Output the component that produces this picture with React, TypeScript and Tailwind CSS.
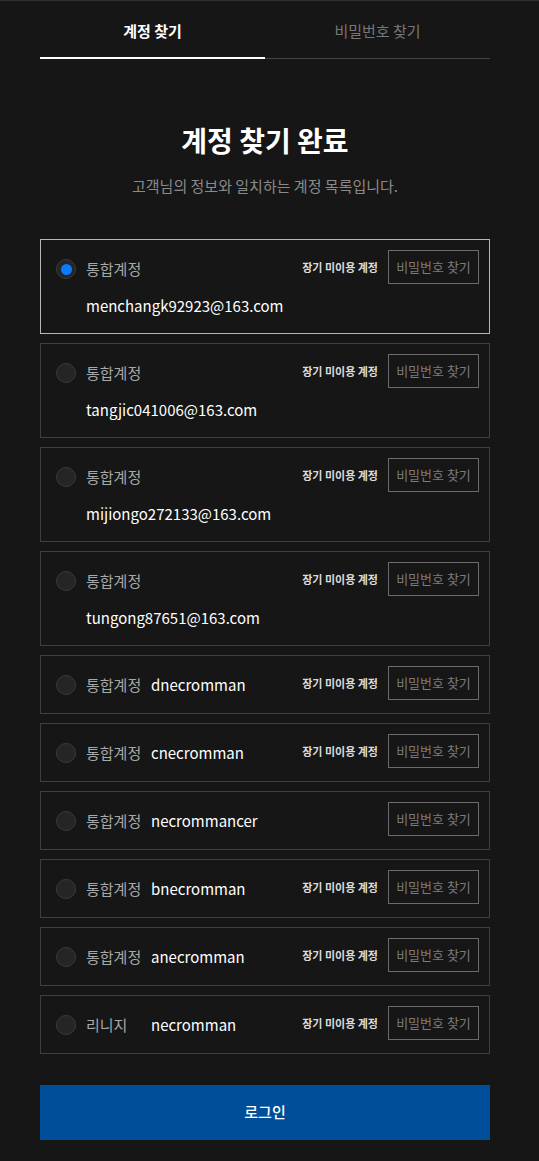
import React, { useState } from 'react';

interface Account {
  type: string;
  id: string;
  dormant: boolean;
  twoLine: boolean;
}

const accounts: Account[] = [
  { type: '통합계정', id: 'menchangk92923@163.com', dormant: true, twoLine: true },
  { type: '통합계정', id: 'tangjic041006@163.com', dormant: true, twoLine: true },
  { type: '통합계정', id: 'mijiongo272133@163.com', dormant: true, twoLine: true },
  { type: '통합계정', id: 'tungong87651@163.com', dormant: true, twoLine: true },
  { type: '통합계정', id: 'dnecromman', dormant: true, twoLine: false },
  { type: '통합계정', id: 'cnecromman', dormant: true, twoLine: false },
  { type: '통합계정', id: 'necrommancer', dormant: false, twoLine: false },
  { type: '통합계정', id: 'bnecromman', dormant: true, twoLine: false },
  { type: '통합계정', id: 'anecromman', dormant: true, twoLine: false },
  { type: '리니지', id: 'necromman', dormant: true, twoLine: false },
];

const AccountCard: React.FC<{ account: Account; selected: boolean; onSelect: () => void }> = ({
  account,
  selected,
  onSelect,
}) => {
  return (
    <div
      onClick={onSelect}
      className={`border ${selected ? 'border-[#b8b8b8]' : 'border-[#3e3e3e]'} pl-[15px] pr-[10px] pt-[10px] ${
        account.twoLine ? 'pb-[16px]' : 'pb-[9px]'
      } cursor-pointer`}
    >
      <div className="flex h-[38px] items-center">
        <div className="flex h-5 w-5 items-center justify-center rounded-full border border-[#3a3a3a] bg-[#252525]">
          {selected && <div className="h-[11px] w-[11px] rounded-full bg-[#0a7cff]" />}
        </div>
        <span className="ml-[10px] w-[65px] text-[15px] leading-[22px] text-[#a8a8a8]">{account.type}</span>
        {!account.twoLine && <span className="text-[15px] leading-[22px] text-white">{account.id}</span>}
        <div className="ml-auto flex items-start self-start">
          {account.dormant && (
            <span className="mr-[10px] mt-[9px] text-[11px] leading-4 font-semibold text-[#dcdcdc]">장기 미이용 계정</span>
          )}
          <button className="h-[34px] w-[91px] border border-[#6a6a6a] text-[13px] text-[#7a7a7a]">비밀번호 찾기</button>
        </div>
      </div>
      {account.twoLine && (
        <div className="mt-[7px] pl-[30px] text-[15px] leading-[22px] text-white">{account.id}</div>
      )}
    </div>
  );
};

export default function App() {
  const [selected, setSelected] = useState(0);

  return (
    <div
      className="min-h-[1161px] border-t border-[#2e2e2e] bg-[#161616]"
      style={{ fontFamily: '"Noto Sans CJK KR", "Noto Sans", sans-serif' }}
    >
      <div className="ml-10 w-[450px] pb-[21px]">
        <div className="grid grid-cols-2">
          <div className="flex flex-col">
            <div className="flex h-[56px] items-center justify-center pt-[4px] text-[15px] font-semibold text-white">계정 찾기</div>
            <div className="h-[2px] bg-white" />
          </div>
          <div className="flex flex-col">
            <div className="flex h-[56px] items-center justify-center pt-[4px] text-[15px] text-[#777777]">비밀번호 찾기</div>
            <div className="mt-px h-px bg-[#444444]" />
          </div>
        </div>

        <h1 className="mt-[61px] text-center text-[28px] leading-[40px] font-bold text-white">계정 찾기 완료</h1>
        <p className="mt-[16px] text-center text-[15px] leading-5 text-[#8a8a8a]">고객님의 정보와 일치하는 계정 목록입니다.</p>

        <div className="mt-[43px] flex flex-col gap-[9px]">
          {accounts.map((account, index) => (
            <AccountCard
              key={account.id}
              account={account}
              selected={selected === index}
              onSelect={() => setSelected(index)}
            />
          ))}
        </div>

        <button className="mt-[31px] h-[55px] w-full bg-[#004e99] text-[15px] font-medium text-white">로그인</button>
      </div>
    </div>
  );
}
